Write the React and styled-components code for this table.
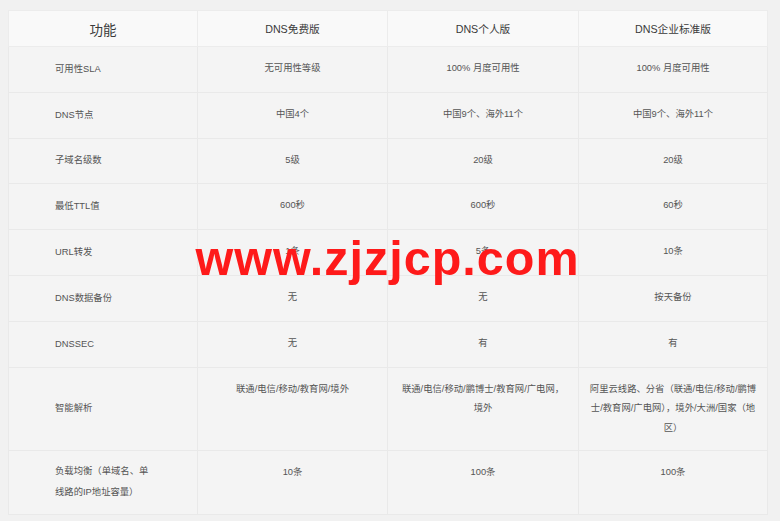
import React from 'react'
import styled, { createGlobalStyle } from 'styled-components'

const GlobalStyle = createGlobalStyle`
  html, body {
    margin: 0;
    padding: 0;
    background: #f1f1f1;
  }
  body {
    font-family: "Liberation Sans", "Noto Sans CJK SC", sans-serif;
  }
`

const Page = styled.div`
  padding: 10px 0 0 8px;
`

const Frame = styled.div`
  position: relative;
  width: 759px;
`

const Table = styled.table`
  width: 759px;
  table-layout: fixed;
  border-collapse: collapse;
  background: #f4f4f4;
  border: 1px solid #e8e8e8;
`

const HeadRow = styled.tr`
  height: 36px;
  background: #f9f9f9;
`

const Row = styled.tr`
  height: ${p => p.$h || 45.8}px;
`

const HeadCell = styled.th`
  border: 1px solid #ececec;
  font-weight: normal;
  color: #3a3a3a;
  font-size: ${p => (p.$big ? '13.5px' : '10.7px')};
  text-align: center;
  vertical-align: middle;
  padding: 0;
`

const LabelCell = styled.td`
  border: 1px solid #e9e9e9;
  padding: 0 46px;
  font-size: 9.33px;
  line-height: 21px;
  color: #555;
  text-align: left;
  vertical-align: middle;
`

const ValueCell = styled.td`
  border: 1px solid #e9e9e9;
  padding: 12px 10px 0;
  font-size: 9.33px;
  line-height: 19.5px;
  color: #555;
  text-align: center;
  vertical-align: top;
`

const Watermark = styled.div`
  position: absolute;
  left: 0;
  right: 0;
  top: 224px;
  text-align: center;
  font-family: "Liberation Sans", Arial, sans-serif;
  font-weight: bold;
  font-size: 48.5px;
  letter-spacing: 1px;
  line-height: 48px;
  color: #fe1a1a;
  pointer-events: none;
`

const headers = ['DNS免费版', 'DNS个人版', 'DNS企业标准版']

const rows = [
  { label: '可用性SLA', values: ['无可用性等级', '100% 月度可用性', '100% 月度可用性'] },
  { label: 'DNS节点', values: ['中国4个', '中国9个、海外11个', '中国9个、海外11个'] },
  { label: '子域名级数', values: ['5级', '20级', '20级'] },
  { label: '最低TTL值', values: ['600秒', '600秒', '60秒'] },
  { label: 'URL转发', values: ['1条', '5条', '10条'] },
  { label: 'DNS数据备份', values: ['无', '无', '按天备份'] },
  { label: 'DNSSEC', values: ['无', '有', '有'] },
  {
    label: '智能解析',
    h: 83,
    values: [
      '联通/电信/移动/教育网/境外',
      '联通/电信/移动/鹏博士/教育网/广电网，境外',
      '阿里云线路、分省（联通/电信/移动/鹏博士/教育网/广电网），境外/大洲/国家（地区）',
    ],
  },
  {
    label: '负载均衡（单域名、单线路的IP地址容量）',
    h: 64,
    values: ['10条', '100条', '100条'],
  },
]

const App = () => (
  <Page>
    <GlobalStyle />
    <Frame>
      <Table>
        <colgroup>
          <col style={{ width: 189 }} />
          <col style={{ width: 190 }} />
          <col style={{ width: 191 }} />
          <col style={{ width: 189 }} />
        </colgroup>
        <thead>
          <HeadRow>
            <HeadCell $big>功能</HeadCell>
            {headers.map(h => (
              <HeadCell key={h}>{h}</HeadCell>
            ))}
          </HeadRow>
        </thead>
        <tbody>
          {rows.map(row => (
            <Row key={row.label} $h={row.h}>
              <LabelCell>{row.label}</LabelCell>
              {row.values.map((v, i) => (
                <ValueCell key={i}>{v}</ValueCell>
              ))}
            </Row>
          ))}
        </tbody>
      </Table>
      <Watermark>www.zjzjcp.com</Watermark>
    </Frame>
  </Page>
)

export default App
